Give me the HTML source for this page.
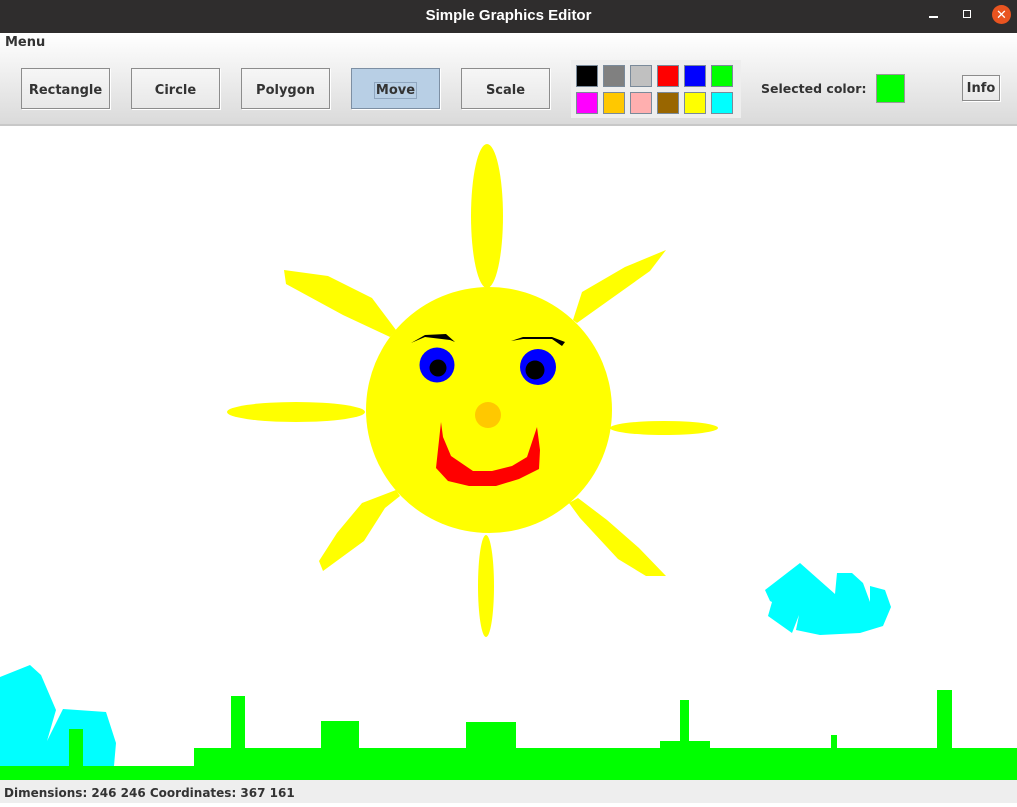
<!DOCTYPE html>
<html><head><meta charset="utf-8"><style>
*{margin:0;padding:0;box-sizing:border-box}
body{width:1017px;height:803px;overflow:hidden;position:relative;font-family:"Liberation Sans","DejaVu Sans",sans-serif;background:#fff}
.title{position:absolute;left:0;top:0;width:1017px;height:33px;background:#2f2d2d;color:#fff;font-weight:bold;font-size:15px;text-align:center;line-height:31px;font-family:"Liberation Sans",sans-serif}
.tb{position:absolute;left:0;top:33px;width:1017px;height:92px;background:linear-gradient(#fff,#dadada)}
.line{position:absolute;left:0;top:124px;width:1017px;height:2px;background:#c8c8c8}
.menu{position:absolute;left:5px;top:35px;font-size:13px;font-weight:bold;color:#333;font-family:"DejaVu Sans",sans-serif}
.btn{position:absolute;top:68px;width:89px;height:41px;border:1px solid #8c8c8c;background:linear-gradient(#f6f6f6,#e8e8e8);font-size:13px;font-weight:bold;color:#333;text-align:center;line-height:43px;font-family:"DejaVu Sans",sans-serif;box-shadow:1px 1px 0 #fff}
.btn.sel{background:#b8cfe5;border-color:#7d8fa3}
.pal{position:absolute;left:571px;top:60px;width:170px;height:58px;background:#eeeeee}
.sw{position:absolute;width:22px;height:22px;border:1px solid #7a8a9a}
.lbl{position:absolute;left:761px;top:81px;font-size:12.5px;font-weight:bold;color:#333;font-family:"DejaVu Sans",sans-serif}
.status{position:absolute;left:0;top:780px;width:1017px;height:23px;background:#eeeeee;font-size:12px;font-weight:bold;color:#333;padding-left:4px;line-height:27px;font-family:"DejaVu Sans",sans-serif}
</style></head><body>
<div class="title">Simple Graphics Editor</div>
<div style="position:absolute;left:929px;top:16px;width:9px;height:1.5px;background:#fff"></div>
<div style="position:absolute;left:963px;top:10px;width:8px;height:8px;border:1.5px solid #fff"></div>
<div style="position:absolute;left:992px;top:5px;width:19px;height:19px;border-radius:50%;background:#e95420;color:#fff;font-size:13px;text-align:center;line-height:19px">✕</div>
<div class="tb"></div><div class="line"></div>
<div class="menu">Menu</div>
<div class="btn" style="left:21px">Rectangle</div>
<div class="btn" style="left:131px">Circle</div>
<div class="btn" style="left:241px">Polygon</div>
<div class="btn sel" style="left:351px"><span style="border:1px solid #8fa6bf;padding:0 1px">Move</span></div>
<div class="btn" style="left:461px">Scale</div>
<div class="pal"></div>
<div class="sw" style="left:576px;top:65px;background:#000"></div>
<div class="sw" style="left:603px;top:65px;background:#808080"></div>
<div class="sw" style="left:630px;top:65px;background:#c0c0c0"></div>
<div class="sw" style="left:657px;top:65px;background:#f00"></div>
<div class="sw" style="left:684px;top:65px;background:#00f"></div>
<div class="sw" style="left:711px;top:65px;background:#0f0"></div>
<div class="sw" style="left:576px;top:92px;background:#f0f"></div>
<div class="sw" style="left:603px;top:92px;background:#ffc800"></div>
<div class="sw" style="left:630px;top:92px;background:#ffafaf"></div>
<div class="sw" style="left:657px;top:92px;background:#996600"></div>
<div class="sw" style="left:684px;top:92px;background:#ff0"></div>
<div class="sw" style="left:711px;top:92px;background:#0ff"></div>
<div class="lbl">Selected color:</div>
<div style="position:absolute;left:876px;top:74px;width:29px;height:29px;border:1px solid #999;background:#0f0"></div>
<div class="btn" style="left:962px;top:75px;width:38px;height:26px;line-height:26px">Info</div>
<svg style="position:absolute;left:0;top:0" width="1017" height="780">
<g fill="#ffff00">
<ellipse cx="487" cy="216" rx="16" ry="72"/>
<ellipse cx="296" cy="412" rx="69" ry="10"/>
<ellipse cx="664" cy="428" rx="54" ry="7"/>
<ellipse cx="486" cy="586" rx="8" ry="51"/>
<polygon points="284,270 328,276 372,298 396,330 390,337 343,315 286,284"/>
<polygon points="573,320 582,292 625,267 666,250 650,271 577,323"/>
<polygon points="396,490 362,503 337,533 319,561 323,571 364,541 385,508 400,496"/>
<polygon points="569,503 578,498 607,520 639,548 666,576 646,576 618,559 580,518"/>
<circle cx="489" cy="410" r="123"/>
</g>
<polygon fill="#000" points="411,343 425,335 446,334 455,342 450,340 425,337"/>
<polygon fill="#000" points="511,341 523,337 552,337 565,342 562,346 552,339 523,339"/>
<circle cx="437" cy="365" r="17.5" fill="#00f"/><circle cx="438" cy="368" r="8.5" fill="#000"/>
<circle cx="538" cy="367" r="18" fill="#00f"/><circle cx="535" cy="370" r="9.5" fill="#000"/>
<circle cx="488" cy="415" r="13" fill="#ffc800"/>
<polygon fill="#f00" points="441,422 436,468 448,481 469,486 496,486 519,479 539,469 540,450 537,427 527,457 512,466 492,471 473,471 451,456 443,437"/>
<polygon fill="#0ff" points="800,563 835,594 837,573 852,573 863,583 870,602 870,586 885,590 891,607 883,626 860,633 820,635 796,630 799,615 792,633 768,616 772,602 770,601 765,590"/>
<polygon fill="#0ff" points="0,677 30,665 41,675 56,710 47,741 63,709 106,712 116,743 114,766 0,766"/>
<g fill="#00ff00">
<rect x="0" y="766" width="1017" height="14"/>
<rect x="194" y="748" width="823" height="32"/>
<rect x="69" y="729" width="14" height="40"/>
<rect x="231" y="696" width="14" height="54"/>
<rect x="321" y="721" width="38" height="29"/>
<rect x="466" y="722" width="50" height="28"/>
<rect x="660" y="741" width="50" height="9"/>
<rect x="680" y="700" width="9" height="50"/>
<rect x="831" y="735" width="6" height="15"/>
<rect x="937" y="690" width="15" height="60"/>
</g>
</svg>
<div class="status">Dimensions: 246 246 Coordinates: 367 161</div>
</body></html>
